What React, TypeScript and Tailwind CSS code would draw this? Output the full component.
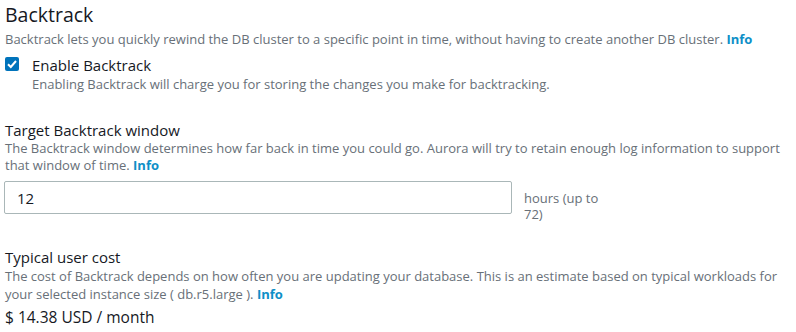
const font = '"Open Sans", "Liberation Sans", sans-serif'

function Info() {
  return <a className="font-bold text-[#0e8fc7]">Info</a>
}

export default function App() {
  return (
    <div
      className="w-[796px] h-[332px] bg-white text-[#16191f] overflow-hidden"
      style={{ fontFamily: font }}
    >
      <div className="pl-[5px] w-[795px]">
        <h2 className="text-[19.5px] leading-[30px] font-normal">Backtrack</h2>
        <p className="text-[13px] leading-[18px] text-[#687078]">
          Backtrack lets you quickly rewind the DB cluster to a specific point in time, without having to create another DB cluster.{" "}
          <Info />
        </p>

        <label className="mt-[7px] flex items-start gap-[13px]">
          <span className="mt-[2px] flex h-[14px] w-[14px] shrink-0 items-center justify-center rounded-[2px] bg-[#0073bb]">
            <svg viewBox="0 0 14 14" className="h-[14px] w-[14px]">
              <path d="M3 7.2 L5.8 10 L11 4" fill="none" stroke="white" strokeWidth="2" />
            </svg>
          </span>
          <span className="flex flex-col">
            <span className="text-[15px] leading-[20px]">Enable Backtrack</span>
            <span className="text-[13px] leading-[18px] text-[#687078]">
              Enabling Backtrack will charge you for storing the changes you make for backtracking.
            </span>
          </span>
        </label>

        <div className="mt-[27px]">
          <div className="text-[15px] leading-[20px]">Target Backtrack window</div>
          <p className="text-[13px] leading-[17px] text-[#687078]">
            The Backtrack window determines how far back in time you could go. Aurora will try to retain enough log information to support that window of time.{" "}
            <Info />
          </p>
          <div className="mt-[7px] flex items-start gap-[12px]">
            <input
              defaultValue="12"
              className="h-[33px] w-[508px] -ml-[1px] rounded-[2px] border border-[#aab7b8] px-[12px] text-[15px] text-[#16191f] outline-none"
              style={{ fontFamily: font }}
            />
            <span className="mt-[9px] w-[82px] text-[13px] leading-[16px] text-[#687078]">hours (up to 72)</span>
          </div>
        </div>

        <div className="mt-[25px]">
          <div className="text-[15px] leading-[20px]">Typical user cost</div>
          <p className="text-[13px] leading-[18px] text-[#687078]">
            The cost of Backtrack depends on how often you are updating your database. This is an estimate based on typical workloads for your selected instance size ( db.r5.large ).{" "}
            <Info />
          </p>
          <div className="mt-[4px] text-[15.5px] leading-[20px]">$ 14.38 USD / month</div>
        </div>
      </div>
    </div>
  )
}
